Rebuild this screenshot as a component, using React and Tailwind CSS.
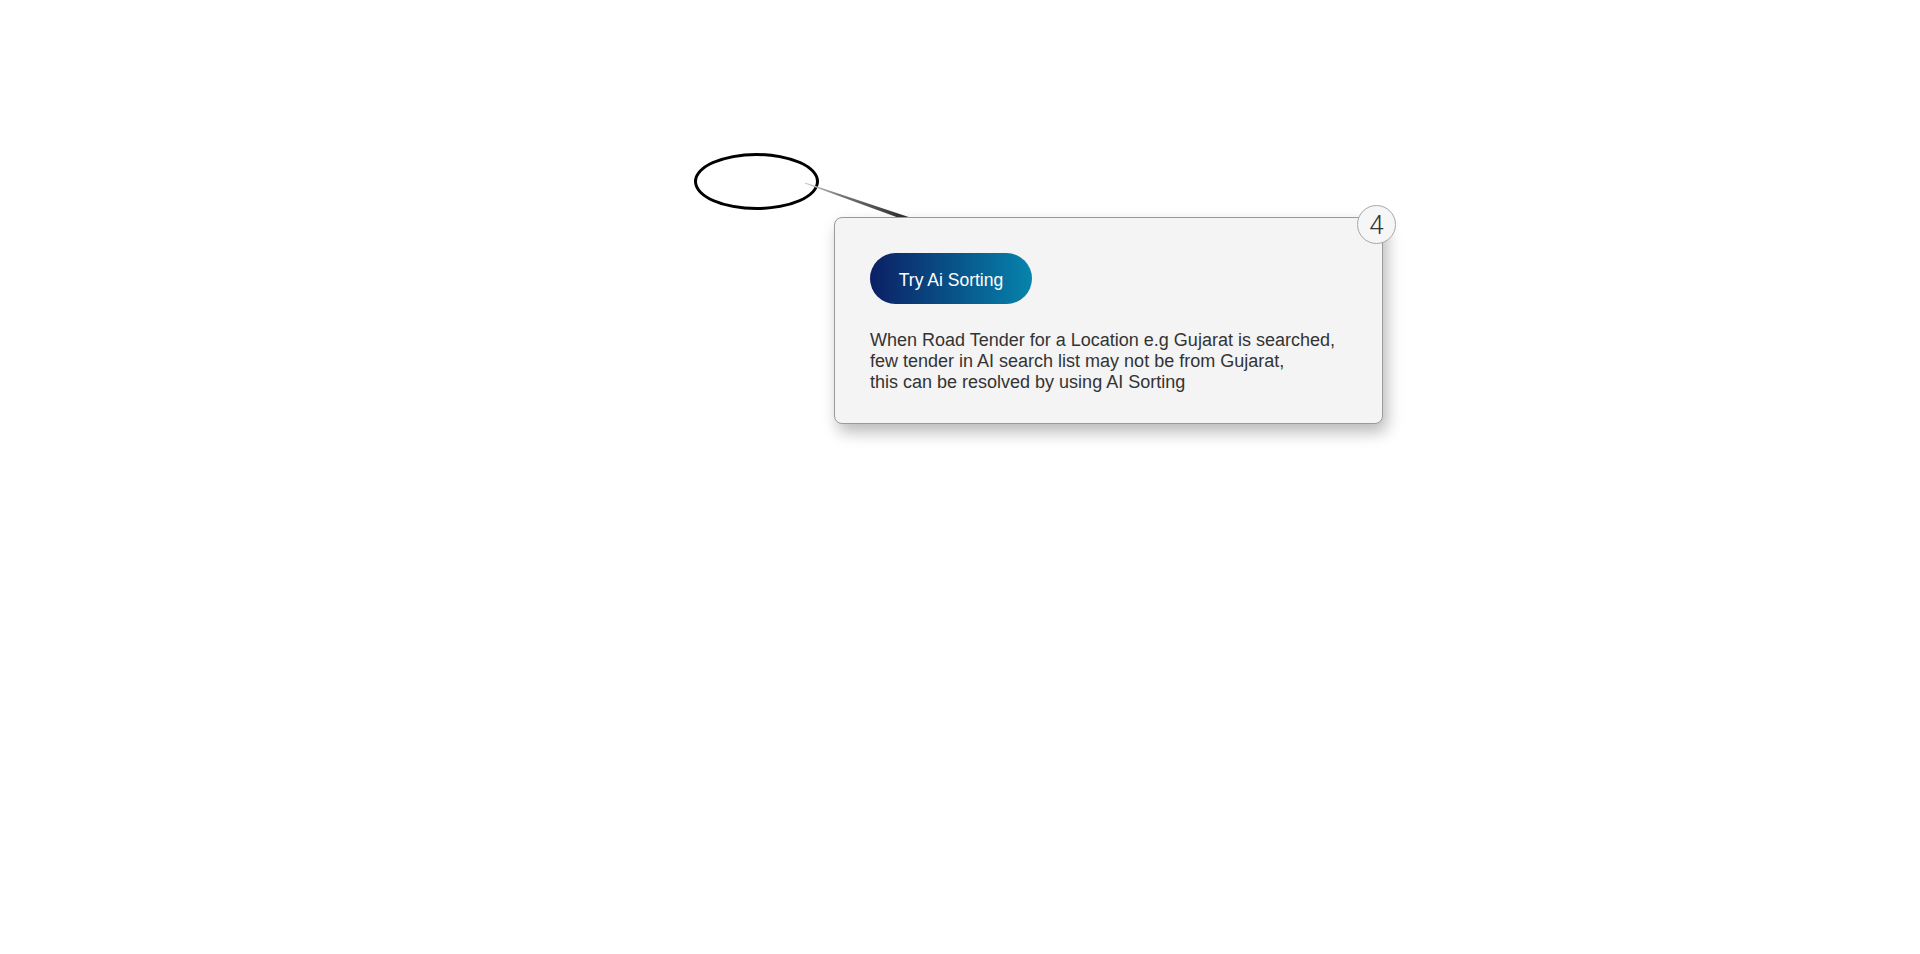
import React from "react";

const Connector = () => (
    <svg
        className="absolute left-[800px] top-[178px]"
        width="112"
        height="46"
        viewBox="0 0 112 46"
    >
        <defs>
            <linearGradient id="conn" x1="0" y1="0" x2="1" y2="0">
                <stop offset="0" stopColor="#d0d0d0" />
                <stop offset="0.35" stopColor="#777777" />
                <stop offset="1" stopColor="#2a2a2a" />
            </linearGradient>
        </defs>
        <polygon
            points="4.8,5.5 5.2,4.5 108.6,39.1 107.4,42.9"
            fill="url(#conn)"
        />
    </svg>
);

const App = () => {
    return (
        <div className="relative w-full h-[954px] bg-white overflow-hidden font-['Liberation_Sans',Arial,sans-serif]">
            {/* highlighted target */}
            <div className="absolute left-[694px] top-[153px] w-[125px] h-[57px] rounded-[50%] border-[3px] border-black" />

            <Connector />

            {/* tour step popover */}
            <div className="absolute left-[834px] top-[217px] w-[549px] h-[207px] rounded-[8px] border border-[#9a9a9a] bg-[#f4f4f4] shadow-[4px_8px_16px_rgba(0,0,0,0.28)]">
                <div className="flex flex-col items-start pt-[35px] px-[35px]">
                    <button className="h-[51px] w-[162px] pt-[3px] rounded-full bg-gradient-to-r from-[#0c1f64] to-[#0784ac] text-white text-[17.5px] flex items-center justify-center">
                        Try Ai Sorting
                    </button>
                    <p className="mt-[26px] text-[18px] leading-[21px] text-[#333333]">
                        When Road Tender for a Location e.g Gujarat is searched,
                        <br />
                        few tender in AI search list may not be from Gujarat,
                        <br />
                        this can be resolved by using AI Sorting
                    </p>
                </div>

                {/* step badge */}
                <div className="absolute -right-[14px] -top-[13px] w-[39px] h-[39px] rounded-full border border-[#a8a8a8] bg-[#f6f6f6] flex items-center justify-center">
                    <span className="font-['Roboto',sans-serif] font-light text-[26px] leading-none text-[#333333]">
                        4
                    </span>
                </div>
            </div>
        </div>
    );
};

export default App;
